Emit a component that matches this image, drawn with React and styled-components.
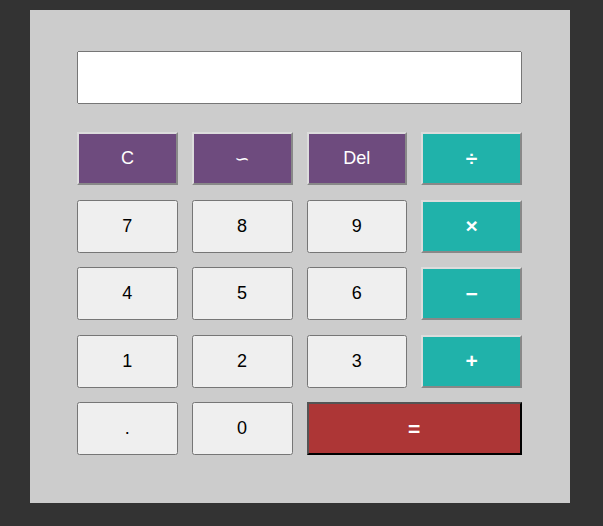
import styled, { createGlobalStyle } from "styled-components";

const GlobalStyle = createGlobalStyle`
  body {
    margin: 0;
    padding: 10px 30px;
    background-color: #333333;
    font-family: "Liberation Sans", Arial, sans-serif;
  }
`;

const Calculator = styled.div`
  width: 540px;
  box-sizing: border-box;
  padding: 41px 47px 48px 47px;
  background-color: #cccccc;
`;

const Display = styled.input`
  display: block;
  width: 445px;
  height: 53px;
  box-sizing: border-box;
  margin: 0 0 28px 0;
  font-family: "Liberation Sans", Arial, sans-serif;
  font-size: 24px;
  text-align: right;
`;

const Keys = styled.div`
  width: 445px;
  display: grid;
  grid-template-columns: repeat(4, 1fr);
  grid-auto-rows: 53px;
  column-gap: 14px;
  row-gap: 14.5px;
`;

const Key = styled.button`
  font-family: "Liberation Sans", Arial, sans-serif;
  font-size: 18px;
  color: #000000;
  grid-column: ${(props) => (props.$wide ? "span 2" : "auto")};
`;

const FuncKey = styled(Key)`
  background-color: #6e4b7e;
  border: 2px outset #dcdcdc;
  color: #ffffff;
`;

const Wave = styled.span`
  font-family: "DejaVu Sans", sans-serif;
  font-size: 18px;
`;

const OpKey = styled(Key)`
  background-color: #20b2aa;
  border: 2px outset #dcdcdc;
  color: #ffffff;
  font-size: 21px;
  font-weight: 700;
`;

const EqualKey = styled(Key)`
  background-color: #ad3636;
  border: 2px outset #000000;
  color: #ffffff;
  font-size: 21px;
  font-weight: 700;
`;

export default function App() {
  return (
    <>
      <GlobalStyle />
      <Calculator>
        <Display type="text" readOnly value="" />
        <Keys>
          <FuncKey>C</FuncKey>
          <FuncKey>
            <Wave>∽</Wave>
          </FuncKey>
          <FuncKey>Del</FuncKey>
          <OpKey>÷</OpKey>

          <Key>7</Key>
          <Key>8</Key>
          <Key>9</Key>
          <OpKey>×</OpKey>

          <Key>4</Key>
          <Key>5</Key>
          <Key>6</Key>
          <OpKey>−</OpKey>

          <Key>1</Key>
          <Key>2</Key>
          <Key>3</Key>
          <OpKey>+</OpKey>

          <Key>.</Key>
          <Key>0</Key>
          <EqualKey $wide>=</EqualKey>
        </Keys>
      </Calculator>
    </>
  );
}
